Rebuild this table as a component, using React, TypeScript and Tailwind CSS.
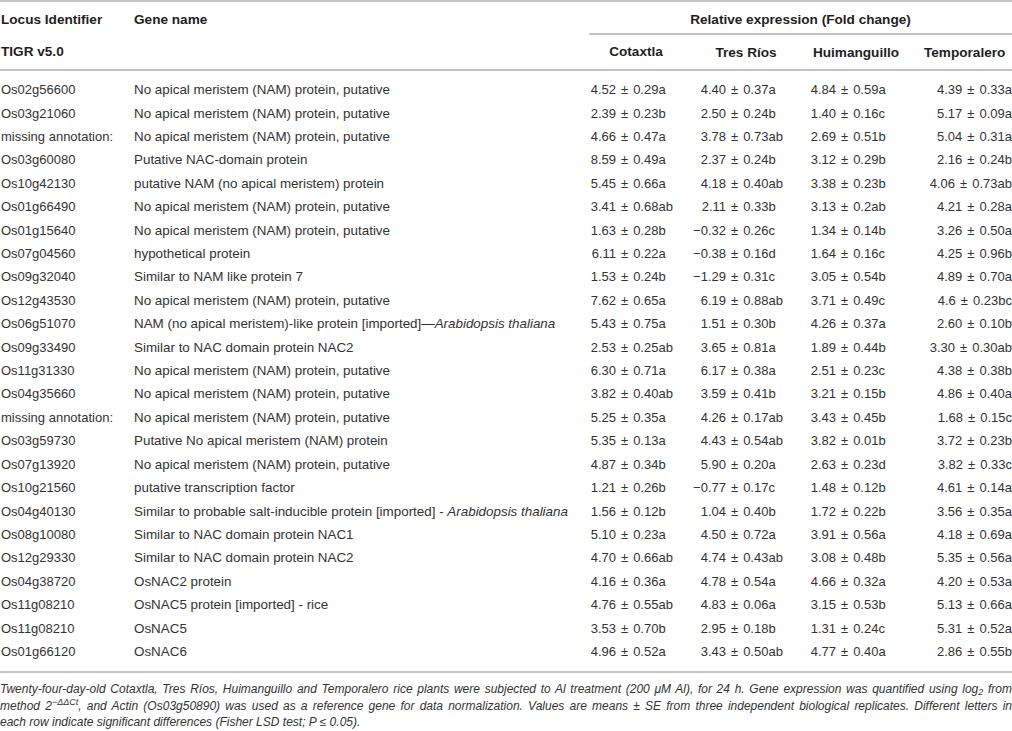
import React from "react";

type Row = {
  locus: string;
  gene: React.ReactNode;
  vals: string[];
};

const NAM = "No apical meristem (NAM) protein, putative";

const rows: Row[] = [
  { locus: "Os02g56600", gene: NAM, vals: ["4.52 ± 0.29a", "4.40 ± 0.37a", "4.84 ± 0.59a", "4.39 ± 0.33a"] },
  { locus: "Os03g21060", gene: NAM, vals: ["2.39 ± 0.23b", "2.50 ± 0.24b", "1.40 ± 0.16c", "5.17 ± 0.09a"] },
  { locus: "missing annotation:", gene: NAM, vals: ["4.66 ± 0.47a", "3.78 ± 0.73ab", "2.69 ± 0.51b", "5.04 ± 0.31a"] },
  { locus: "Os03g60080", gene: "Putative NAC-domain protein", vals: ["8.59 ± 0.49a", "2.37 ± 0.24b", "3.12 ± 0.29b", "2.16 ± 0.24b"] },
  { locus: "Os10g42130", gene: "putative NAM (no apical meristem) protein", vals: ["5.45 ± 0.66a", "4.18 ± 0.40ab", "3.38 ± 0.23b", "4.06 ± 0.73ab"] },
  { locus: "Os01g66490", gene: NAM, vals: ["3.41 ± 0.68ab", "2.11 ± 0.33b", "3.13 ± 0.2ab", "4.21 ± 0.28a"] },
  { locus: "Os01g15640", gene: NAM, vals: ["1.63 ± 0.28b", "−0.32 ± 0.26c", "1.34 ± 0.14b", "3.26 ± 0.50a"] },
  { locus: "Os07g04560", gene: "hypothetical protein", vals: ["6.11 ± 0.22a", "−0.38 ± 0.16d", "1.64 ± 0.16c", "4.25 ± 0.96b"] },
  { locus: "Os09g32040", gene: "Similar to NAM like protein 7", vals: ["1.53 ± 0.24b", "−1.29 ± 0.31c", "3.05 ± 0.54b", "4.89 ± 0.70a"] },
  { locus: "Os12g43530", gene: NAM, vals: ["7.62 ± 0.65a", "6.19 ± 0.88ab", "3.71 ± 0.49c", "4.6 ± 0.23bc"] },
  {
    locus: "Os06g51070",
    gene: (
      <>
        NAM (no apical meristem)-like protein [imported]—<i>Arabidopsis thaliana</i>
      </>
    ),
    vals: ["5.43 ± 0.75a", "1.51 ± 0.30b", "4.26 ± 0.37a", "2.60 ± 0.10b"],
  },
  { locus: "Os09g33490", gene: "Similar to NAC domain protein NAC2", vals: ["2.53 ± 0.25ab", "3.65 ± 0.81a", "1.89 ± 0.44b", "3.30 ± 0.30ab"] },
  { locus: "Os11g31330", gene: NAM, vals: ["6.30 ± 0.71a", "6.17 ± 0.38a", "2.51 ± 0.23c", "4.38 ± 0.38b"] },
  { locus: "Os04g35660", gene: NAM, vals: ["3.82 ± 0.40ab", "3.59 ± 0.41b", "3.21 ± 0.15b", "4.86 ± 0.40a"] },
  { locus: "missing annotation:", gene: NAM, vals: ["5.25 ± 0.35a", "4.26 ± 0.17ab", "3.43 ± 0.45b", "1.68 ± 0.15c"] },
  { locus: "Os03g59730", gene: "Putative No apical meristem (NAM) protein", vals: ["5.35 ± 0.13a", "4.43 ± 0.54ab", "3.82 ± 0.01b", "3.72 ± 0.23b"] },
  { locus: "Os07g13920", gene: NAM, vals: ["4.87 ± 0.34b", "5.90 ± 0.20a", "2.63 ± 0.23d", "3.82 ± 0.33c"] },
  { locus: "Os10g21560", gene: "putative transcription factor", vals: ["1.21 ± 0.26b", "−0.77 ± 0.17c", "1.48 ± 0.12b", "4.61 ± 0.14a"] },
  {
    locus: "Os04g40130",
    gene: (
      <>
        Similar to probable salt-inducible protein [imported] - <i>Arabidopsis thaliana</i>
      </>
    ),
    vals: ["1.56 ± 0.12b", "1.04 ± 0.40b", "1.72 ± 0.22b", "3.56 ± 0.35a"],
  },
  { locus: "Os08g10080", gene: "Similar to NAC domain protein NAC1", vals: ["5.10 ± 0.23a", "4.50 ± 0.72a", "3.91 ± 0.56a", "4.18 ± 0.69a"] },
  { locus: "Os12g29330", gene: "Similar to NAC domain protein NAC2", vals: ["4.70 ± 0.66ab", "4.74 ± 0.43ab", "3.08 ± 0.48b", "5.35 ± 0.56a"] },
  { locus: "Os04g38720", gene: "OsNAC2 protein", vals: ["4.16 ± 0.36a", "4.78 ± 0.54a", "4.66 ± 0.32a", "4.20 ± 0.53a"] },
  { locus: "Os11g08210", gene: "OsNAC5 protein [imported] - rice", vals: ["4.76 ± 0.55ab", "4.83 ± 0.06a", "3.15 ± 0.53b", "5.13 ± 0.66a"] },
  { locus: "Os11g08210", gene: "OsNAC5", vals: ["3.53 ± 0.70b", "2.95 ± 0.18b", "1.31 ± 0.24c", "5.31 ± 0.52a"] },
  { locus: "Os01g66120", gene: "OsNAC6", vals: ["4.96 ± 0.52a", "3.43 ± 0.50ab", "4.77 ± 0.40a", "2.86 ± 0.55b"] },
];

function Val({ v }: { v: string }) {
  const [mean, rest] = v.split(" ± ");
  return (
    <div className="flex whitespace-nowrap">
      <span className="w-[35px] text-right">{mean}</span>
      <span className="px-[5px]">±</span>
      <span>{rest}</span>
    </div>
  );
}

const GRID = "grid grid-cols-[134px_447px_110px_110px_119px_92px]";

export default function App() {
  return (
    <div
      className="w-[1012px] h-[731px] overflow-hidden bg-white text-[#333] text-[13px] leading-[15px]"
      style={{ fontFamily: '"Liberation Sans", Arial, sans-serif' }}
    >
      <div className="border-t-2 border-[#c4c4c4]">
        {/* header row 1 */}
        <div className="flex h-[31px] items-center pt-[3px] font-bold text-[13.6px] text-[#1e1e1e]">
          <div className="w-[134px] pl-[1px]">Locus Identifier</div>
          <div className="w-[455px]">Gene name</div>
          <div className="flex-1 text-center">Relative expression (Fold change)</div>
        </div>
        {/* header row 2 */}
        <div className={`${GRID} h-[36px] items-center font-bold text-[13.6px] text-[#1e1e1e]`}>
          <div className="pl-[1px]">TIGR v5.0</div>
          <div className="h-full"></div>
          <div className="h-full relative flex items-center justify-center">
            <div className="absolute left-[8px] right-0 top-0 border-t-2 border-[#c4c4c4]"></div>
            Cotaxtla
          </div>
          <div className="h-full border-t-2 border-[#c4c4c4] flex items-center justify-center">Tres Ríos</div>
          <div className="h-full border-t-2 border-[#c4c4c4] flex items-center">
            <div className="w-[110px] text-center">Huimanguillo</div>
          </div>
          <div className="h-full border-t-2 border-[#c4c4c4] flex items-center pl-[4px]">Temporalero</div>
        </div>
      </div>
      {/* body */}
      <div className="border-t-2 border-b-2 border-[#c4c4c4] pt-[7px] pb-[8px]">
        {rows.map((r, i) => (
          <div key={i} className={`${GRID} h-[23.42px] items-center whitespace-nowrap`}>
            <div className="pl-[1px]">{r.locus}</div>
            <div className="text-[13.4px]">{r.gene}</div>
            <Val v={r.vals[0]} />
            <Val v={r.vals[1]} />
            <Val v={r.vals[2]} />
            <div className="pl-[9px]">
              <Val v={r.vals[3]} />
            </div>
          </div>
        ))}
      </div>
      {/* footnote */}
      <div className="pt-[8px] italic text-[12px] leading-[16.5px] text-[#333]">
        <div className="text-justify [text-align-last:justify]">
          Twenty-four-day-old Cotaxtla, Tres Ríos, Huimanguillo and Temporalero rice plants were subjected to Al
          treatment (200 μM Al), for 24 h. Gene expression was quantified using log
          <sub className="text-[9px] leading-[0]">2</sub> from
        </div>
        <div className="text-justify [text-align-last:justify]">
          method 2<sup className="text-[9px] leading-[0]">−ΔΔCt</sup>, and Actin (Os03g50890) was used as a reference
          gene for data normalization. Values are means ± SE from three independent biological replicates. Different
          letters in
        </div>
        <div>
          each row indicate significant differences (Fisher LSD test; P ≤ 0.05).
        </div>
      </div>
    </div>
  );
}
